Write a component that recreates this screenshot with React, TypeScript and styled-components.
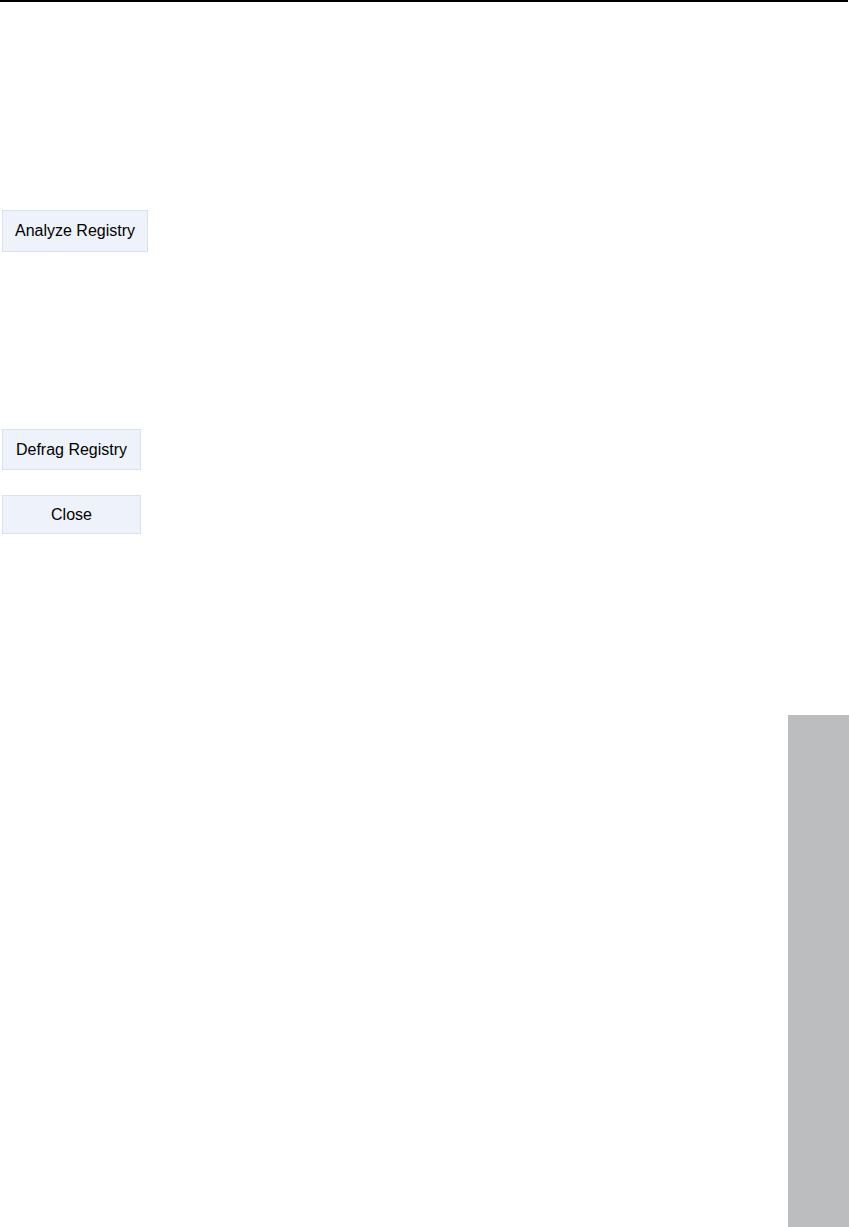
import React from "react";
import styled, { createGlobalStyle } from "styled-components";

const Global = createGlobalStyle`
  html, body { margin: 0; padding: 0; background: #ffffff; }
  body { font-family: "Liberation Sans", Arial, sans-serif; }
`;

const Page = styled.div`
  width: 849px;
  height: 1227px;
  display: flex;
  flex-direction: column;
  overflow: hidden;
`;

const Rule = styled.div`
  height: 2px;
  background: #000000;
  width: 848px;
  flex: none;
`;

const Body = styled.div`
  flex: 1;
  display: grid;
  grid-template-columns: 1fr 61px;
`;

const Main = styled.div`
  display: flex;
  flex-direction: column;
  align-items: flex-start;
  padding-left: 2px;
`;

const Side = styled.div`
  display: flex;
  flex-direction: column;
  padding-top: 713px;
`;

const Tab = styled.div`
  flex: 1;
  background: #bcbdbf;
`;

const Button = styled.button<{ $w: number; $h: number; $mt: number }>`
  width: ${(p) => p.$w}px;
  height: ${(p) => p.$h}px;
  margin-top: ${(p) => p.$mt}px;
  background: #eef3fb;
  border: 1px solid #dce2ea;
  font-family: "Liberation Sans", Arial, sans-serif;
  font-size: 16px;
  color: #000000;
  padding: 0;
  display: flex;
  align-items: center;
  justify-content: center;
  cursor: default;
`;

export default function App() {
  return (
    <>
      <Global />
      <Page>
        <Rule />
        <Body>
          <Main>
            <Button $w={146} $h={42} $mt={208}>Analyze Registry</Button>
            <Button $w={139} $h={41} $mt={177}>Defrag Registry</Button>
            <Button $w={139} $h={39} $mt={25}>Close</Button>
          </Main>
          <Side>
            <Tab />
          </Side>
        </Body>
      </Page>
    </>
  );
}
